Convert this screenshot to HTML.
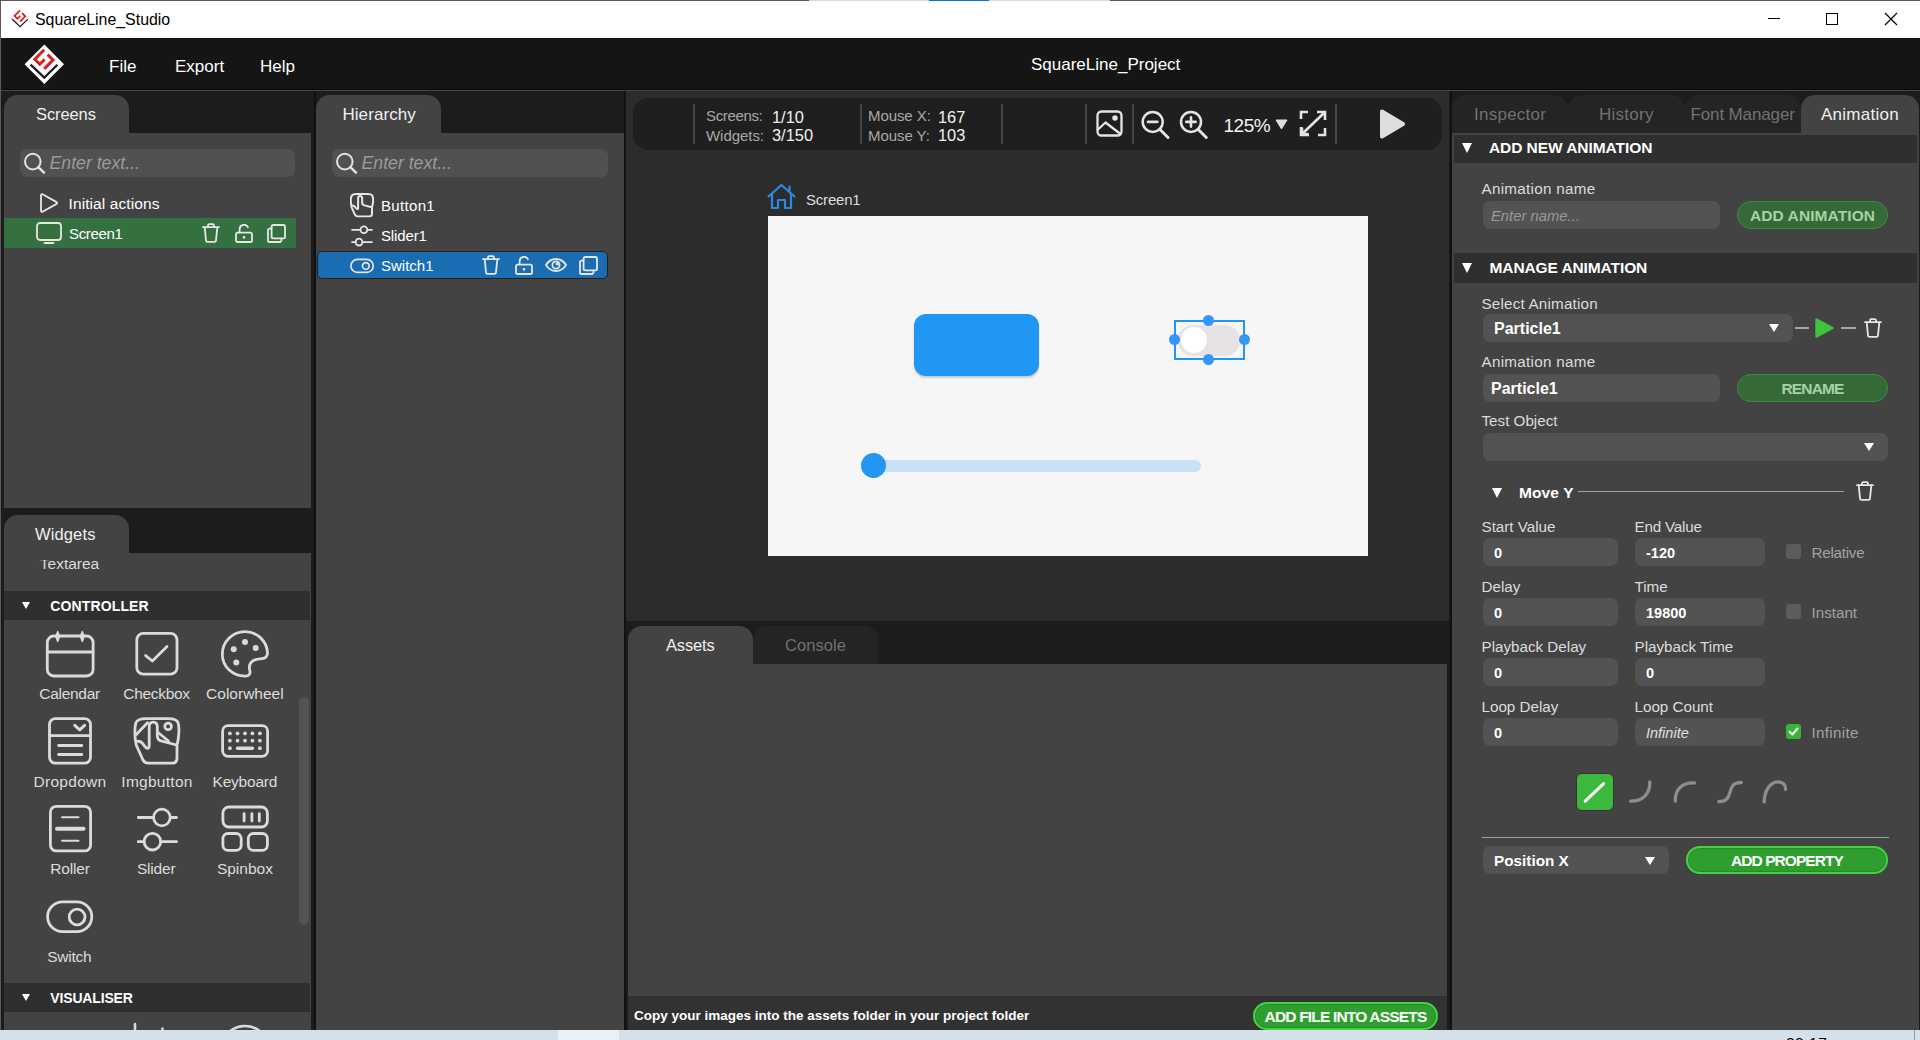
<!DOCTYPE html>
<html lang="en">
<head>
<meta charset="utf-8">
<title>SquareLine_Studio</title>
<style>
*{box-sizing:border-box;margin:0;padding:0}
html,body{width:1920px;height:1040px;overflow:hidden}
body{position:relative;background:#1c1c1c;font-family:"Liberation Sans",sans-serif;color:#e8e8e8;font-size:15px}
.abs{position:absolute}
.t{position:absolute;white-space:nowrap;line-height:1}
svg{position:absolute;overflow:visible}
.ico{fill:none;stroke:#e6e6e6;stroke-width:1.8;stroke-linecap:round;stroke-linejoin:round}
.panel{position:absolute;background:#434343}
.tab{position:absolute;background:#434343;border-radius:14px 14px 0 0;height:38px;top:95px}
.tab.off{background:#242424}
.tab .t{font-size:17px;top:11.2px;color:#f0f0f0;letter-spacing:.25px}
.tab .t.l{font-size:16.5px;top:11.200px;letter-spacing:0}
.tab.off .t{color:#727272}
.inp{position:absolute;background:#535353;border-radius:7px;height:28px}
.inp .t{font-weight:bold;font-size:14.5px;color:#fff;top:7.5px}
.inp .t.os{font-size:16px;top:7px}
.lbl{position:absolute;white-space:nowrap;line-height:1;font-size:15.2px;color:#dcdcdc}
.sec{position:absolute;background:#2f2f2f;height:27px}
.sec .t{font-weight:bold;font-size:15.5px;color:#fff;top:6px;letter-spacing:.1px}
.tri.s{border-left-width:5px;border-right-width:5px;border-top-width:8px}
.tri{position:absolute;width:0;height:0;border-left:5.8px solid transparent;border-right:5.8px solid transparent;border-top:10.6px solid #fff}
.btn{position:absolute;border-radius:14px;height:28px;border:2px solid #42d442;background:#2f9e2f;box-shadow:inset 0 0 0 1px rgba(0,0,0,.13);color:#fff;font-weight:bold;font-size:15.5px;text-align:center;line-height:26px;white-space:nowrap}
.btn.dim{background:#356a38;border:1.5px solid #3c8c40;line-height:27px;box-shadow:none;color:#a6d2a8}
.wl{position:absolute;white-space:nowrap;line-height:1;font-size:15.5px;color:#dcdcdc;text-align:center;width:100px}
</style>
</head>
<body>

<!-- icon symbol library -->
<svg width="0" height="0" style="left:0;top:0">
<defs>
<symbol id="i-search" viewBox="0 0 26 26"><circle cx="9.800" cy="11.600" r="7.800" fill="none" stroke="#e2e2e2" stroke-width="2"/><path d="M15.600 17.400 L21 22.600" stroke="#e2e2e2" stroke-width="2.4" stroke-linecap="round" fill="none"/></symbol>
<symbol id="i-trash" viewBox="0 0 18 20"><g class="ico"><path d="M1 4.2H17"/><path d="M6 4V2.4a1.3 1.3 0 0 1 1.3-1.3h3.4a1.3 1.3 0 0 1 1.3 1.3V4"/><path d="M2.7 4.4L4 17.4a1.6 1.6 0 0 0 1.6 1.5h6.8a1.6 1.6 0 0 0 1.6-1.5L15.3 4.4"/></g></symbol>
<symbol id="i-lock" viewBox="0 0 18 19"><g class="ico"><rect x="1" y="8.6" width="16" height="9.4" rx="1.6"/><path d="M4.6 8.4V5.2a4.4 4.4 0 0 1 8.3-2"/><path d="M9 12v2.6" stroke-width="2.2" stroke-linecap="butt"/></g></symbol>
<symbol id="i-copy" viewBox="0 0 19 19"><g class="ico"><rect x="4.6" y="1" width="13.4" height="13.4" rx="1.6"/><path d="M4.4 4.6H2.6A1.6 1.6 0 0 0 1 6.2v10.2A1.6 1.6 0 0 0 2.6 18h10.2a1.6 1.6 0 0 0 1.6-1.6V14.6"/></g></symbol>
<symbol id="i-eye" viewBox="0 0 22 14"><g class="ico"><path d="M1 7C3.6 2.8 7 1 11 1s7.4 1.8 10 6c-2.6 4.200-6 6-10 6S3.600 11.200 1 7z"/><circle cx="11" cy="7" r="3.6"/><circle cx="12.300" cy="5.800" r="0.700" fill="#e6e6e6"/></g></symbol>
<symbol id="i-switch" viewBox="0 0 26 16"><g class="ico"><rect x="1" y="1" width="24" height="14" rx="7"/><circle cx="17" cy="8" r="3.600"/></g></symbol>
<symbol id="i-slider" viewBox="0 0 22 22"><g class="ico"><path d="M1 4.800H9.400M16.400 4.800H21"/><circle cx="12.900" cy="4.800" r="3.400"/><path d="M1 17.100H4.600M11.400 17.100H21"/><circle cx="8" cy="17.100" r="3.400"/></g></symbol>
<symbol id="i-btn" viewBox="133 717 48 48"><g class="ico" style="stroke-width:4"><path d="M136.200 745C134.600 738 134.400 727 136 722.500C137.500 719 141 718.600 146 718.600H168C173.500 718.600 176.800 719.200 178 722.500C179.600 727 179 738 177 745V758C177 761.500 175.500 763.200 172 763.200H148C145.500 763.200 144 762 143 760Z"/><path d="M137 741.500C140 740.500 142.500 743 144.500 746C146 748.500 149.200 749.500 149.200 746V727C149.200 723.500 151 722.200 153.200 722.200C155.500 722.200 157.300 723.500 157.300 727V736C157.300 739 159 740.500 162 741.200L176.500 745"/></g></symbol>
</defs>
</svg>
<!-- ===== title bar ===== -->
<div class="abs" id="titlebar" style="left:0;top:0;width:1920px;height:38px;background:#fff"></div>
<div class="abs" style="left:0;top:0;width:809px;height:1px;background:#5a5a5a"></div>
<div class="abs" style="left:809px;top:0;width:301px;height:1px;background:#d9d9d9"></div>
<div class="abs" style="left:929px;top:0;width:60px;height:1px;background:#0a73d9"></div>
<div class="abs" style="left:1110px;top:0;width:810px;height:1px;background:#5a5a5a"></div>
<div class="t" style="left:35px;top:12.300px;font-size:15.9px;color:#000">SquareLine_Studio</div>
<!-- ===== menu bar ===== -->
<div class="abs" id="menubar" style="left:0;top:38px;width:1920px;height:52px;background:#151515"></div>
<div class="abs" style="left:0;top:89px;width:1920px;height:1px;background:#0b0b0b"></div>
<div class="abs" style="left:0;top:90px;width:1920px;height:1px;background:#474747"></div>
<div class="t" style="left:109px;top:58px;font-size:17px;color:#fff">File</div>
<div class="t" style="left:175px;top:58px;font-size:17px;color:#fff">Export</div>
<div class="t" style="left:260px;top:58px;font-size:17px;color:#fff">Help</div>
<div class="t" style="left:1031px;top:56px;font-size:17px;color:#fff">SquareLine_Project</div>
<svg style="left:0;top:0" width="100" height="90" viewBox="0 0 100 90">
<defs><g id="slmark"><path d="M44.200 49.800L34.800 59.200L39.800 64.200L44.600 59.400" fill="none" stroke="#db1f1f" stroke-width="3"/><path d="M47.600 54.600L53 60L44.200 68.900" fill="none" stroke="#db1f1f" stroke-width="3"/><path d="M30.600 64.600L44.300 77.600L57.400 64.800" fill="none" stroke="#1c1c1c" stroke-width="2.200"/></g></defs>
<path d="M44.300 44.600L64 64.200L44.300 83.900L24.600 64.200z" fill="#fff"/>
<use href="#slmark"/>
<g transform="translate(20.100 27.400) scale(0.590) translate(-44.300 -78.800)"><use href="#slmark"/></g>
</svg>
<svg style="left:1760px;top:8px" width="150" height="22" viewBox="1760 8 150 22"><g fill="none" stroke="#000" stroke-width="1"><path d="M1768 18.500H1780"/><rect x="1826.500" y="13.500" width="11" height="11"/><path d="M1885 13L1897 25M1897 13L1885 25" stroke-width="1.200"/></g></svg>
<!-- window left border -->
<div class="abs" style="left:0;top:1px;width:1px;height:1029px;background:#5a5a5a"></div>

<!-- ===== SCREENS panel ===== -->
<div class="tab" style="left:4px;width:125px"><div class="t l" style="left:32px;letter-spacing:-.1px">Screens</div></div>
<div class="panel" id="screens" style="left:4px;top:133px;width:307px;height:375px">
<div class="inp" style="left:16px;top:16px;width:275px;height:28px;background:#515151"><svg style="left:3px;top:1px" width="26" height="26"><use href="#i-search"/></svg><div class="t" style="left:29.500px;top:6px;font-size:17.700px;font-style:italic;font-weight:normal;color:#9b9b9b">Enter text...</div></div>
<svg style="left:36px;top:60px" width="18" height="20" viewBox="0 0 18 20"><path class="ico" d="M1 2.200V17.800a1 1 0 0 0 1.500 0.900L16.600 10.900a1 1 0 0 0 0-1.800L2.500 1.300A1 1 0 0 0 1 2.200z"/></svg>
<div class="t" style="left:64.500px;top:63px;font-size:15.500px;letter-spacing:.1px;color:#fff">Initial actions</div>
<div class="abs" style="left:0;top:85px;width:292px;height:30px;background:#357040"></div>
<svg style="left:32px;top:89px" width="26" height="22" viewBox="0 0 26 22"><g class="ico"><rect x="1" y="1" width="24" height="17" rx="3"/><path d="M8.500 21H17.500"/></g></svg>
<div class="t" style="left:65px;top:93px;font-size:15px;letter-spacing:-.35px;color:#fff">Screen1</div>
<svg style="left:198px;top:90px" width="18" height="20"><use href="#i-trash"/></svg>
<svg style="left:231px;top:91px" width="18" height="19"><use href="#i-lock"/></svg>
<svg style="left:263px;top:91px" width="19" height="19"><use href="#i-copy"/></svg>
</div>

<!-- ===== WIDGETS panel ===== -->
<div class="tab" style="left:4px;top:515px;width:125px"><div class="t l" style="left:31px;letter-spacing:.13px">Widgets</div></div>
<div class="panel" id="widgets" style="left:4px;top:553px;width:307px;height:477px;overflow:hidden">
<div class="abs" style="left:0;top:7px;width:307px;height:30px;overflow:hidden"><div class="wl" style="left:15.5px;top:-4px">Textarea</div></div>
<div class="sec" style="left:0;top:37.5px;width:306px;height:29px"><div class="tri s" style="left:18px;top:11px;border-left-width:4.5px;border-right-width:4.500px;border-top-width:7.500px"></div><div class="t" style="left:46.300px;top:8px;font-size:14px;letter-spacing:.13px">CONTROLLER</div></div>
<div class="wl" style="left:15.599999999999994px;top:133.3px;letter-spacing:-0.3px">Calendar</div>
<div class="wl" style="left:102.5px;top:133.3px;letter-spacing:-0.3px">Checkbox</div>
<div class="wl" style="left:190.9px;top:133.3px">Colorwheel</div>
<div class="wl" style="left:16px;top:221px;letter-spacing:0.3px">Dropdown</div>
<div class="wl" style="left:103px;top:221px;letter-spacing:0.27px">Imgbutton</div>
<div class="wl" style="left:190.9px;top:221px;letter-spacing:-0.2px">Keyboard</div>
<div class="wl" style="left:16px;top:308px;letter-spacing:-0.2px">Roller</div>
<div class="wl" style="left:102.19999999999999px;top:308px;letter-spacing:-0.2px">Slider</div>
<div class="wl" style="left:190.9px;top:308px">Spinbox</div>
<div class="wl" style="left:15.299999999999997px;top:395.8px;letter-spacing:-0.25px">Switch</div>
<svg style="left:0;top:0" width="307" height="477" viewBox="4 553 307 477"><g fill="none" stroke="#dbdbdb" stroke-width="2.800" stroke-linecap="round" stroke-linejoin="round">
<rect x="47.300" y="636" width="45.800" height="40" rx="6.500"/><path d="M47.500 652H93"/><path d="M57.700 631.500L59.600 636.500L57.700 641.500L55.800 636.500zM82.300 631.500L84.200 636.500L82.300 641.500L80.400 636.500z" fill="#d9d9d9" stroke-width="1.400"/>
<rect x="136.800" y="633.400" width="40.200" height="40.800" rx="6.500"/><path d="M145.600 655.600L152.400 661L167 646.500"/>
<path d="M245 631.700C232.500 631.700 222.300 641.800 222.300 654.200C222.300 666.600 232.500 676.200 245 676.200C249.500 676.200 250.500 673.500 249.800 670.500C248.800 666.500 249.500 662.500 254 660.200C258 658.200 262.500 659.500 265.500 657.500C267.500 656.200 267.600 654.200 267.500 652.500C266.500 640.500 257 631.700 245 631.700z"/>
<g fill="#d9d9d9" stroke="none"><circle cx="233.700" cy="649.200" r="3"/><circle cx="245" cy="642" r="3"/><circle cx="255.700" cy="648" r="3"/><circle cx="236.300" cy="662.400" r="3"/></g>
<rect x="49.500" y="718.600" width="41" height="44.600" rx="6"/><path d="M49.700 735.600H90.300"/><path d="M74.800 725.300L79.700 729.800L84.600 725.300" stroke-width="3"/><path d="M58.600 745.500H81.800M58.600 754.500H81.800"/>
<path d="M136.200 745C134.600 738 134.400 727 136 722.500C137.500 719 141 718.600 146 718.600H168C173.500 718.600 176.800 719.200 178 722.500C179.600 727 179 738 177 745V758C177 761.500 175.500 763.200 172 763.200H148C145.500 763.200 144 762 143 760Z"/>
<path d="M137 741.500C140 740.500 142.500 743 144.500 746C146 748.500 149.200 749.500 149.200 746V727C149.200 723.500 151 722.200 153.200 722.200C155.500 722.200 157.300 723.500 157.300 727V736C157.300 739 159 740.500 162 741.200L176.500 745"/>
<path d="M136.300 734.500L147.500 722.800M158 732.500L168.500 741"/>
<circle cx="168.100" cy="726.400" r="3.300"/>
<rect x="222.600" y="725.700" width="45" height="30.600" rx="5.500"/><g fill="#d9d9d9" stroke="none">
<circle cx="229.9" cy="733.4" r="1.900"/>
<circle cx="237.5" cy="733.4" r="1.900"/>
<circle cx="245" cy="733.4" r="1.900"/>
<circle cx="252.4" cy="733.4" r="1.900"/>
<circle cx="259.9" cy="733.4" r="1.900"/>
<circle cx="229.9" cy="740.7" r="1.900"/>
<circle cx="237.5" cy="740.7" r="1.900"/>
<circle cx="245" cy="740.7" r="1.900"/>
<circle cx="252.4" cy="740.7" r="1.900"/>
<circle cx="259.9" cy="740.7" r="1.900"/>
<circle cx="229.900" cy="748.200" r="1.900"/><circle cx="259.900" cy="748.200" r="1.900"/></g><path d="M237.500 748.200H252.400" stroke-width="3.400"/>
<rect x="50.400" y="806.300" width="40.200" height="44.600" rx="6"/><path d="M62 817.200H78.500M62 840.800H78.500" stroke-width="2"/><path d="M57 828.800H83.500" stroke-width="4"/>
<path d="M138.300 817.500H153.500M170.300 817.500H176.500"/><circle cx="161.900" cy="817.500" r="8.300"/><path d="M138.300 841.700H144M160.800 841.700H176.500"/><circle cx="152.400" cy="841.700" r="8.300"/>
<rect x="222.900" y="807" width="44.500" height="20" rx="6"/><path d="M244.100 813.600V821M251.900 813.600V821M259.300 813.600V821"/><rect x="222.900" y="833.500" width="18.300" height="16.800" rx="5"/><rect x="248.300" y="833.500" width="19.100" height="16.800" rx="5"/>
<rect x="47.600" y="901.900" width="44.200" height="29.800" rx="14.900"/><circle cx="77.100" cy="917" r="7.900"/>
</g></svg>
<div class="sec" style="left:0;top:430px;width:306px;height:29px"><div class="tri s" style="left:18px;top:11px;border-left-width:4.5px;border-right-width:4.500px;border-top-width:7.500px"></div><div class="t" style="left:46.300px;top:8px;font-size:14px;letter-spacing:-.16px">VISUALISER</div></div>
<svg style="left:0;top:459px" width="307" height="20" viewBox="4 1012 307 20"><g fill="none" stroke="#d9d9d9" stroke-width="2.600" stroke-linecap="round"><path d="M135 1024V1040M162.500 1028.500V1040"/><circle cx="245" cy="1050" r="24"/></g></svg>
<div class="abs" style="left:295px;top:144px;width:10px;height:228px;border-radius:5px;background:#535353"></div>
</div>

<!-- ===== HIERARCHY panel ===== -->
<div class="tab" style="left:316px;width:125px"><div class="t" style="left:26.400px;letter-spacing:.09px">Hierarchy</div></div>
<div class="panel" id="hier" style="left:316px;top:133px;width:308px;height:897px">
<div class="inp" style="left:16px;top:16px;width:276px;height:28px;background:#515151"><svg style="left:3px;top:1px" width="26" height="26"><use href="#i-search"/></svg><div class="t" style="left:29.500px;top:6px;font-size:17.700px;font-style:italic;font-weight:normal;color:#9b9b9b">Enter text...</div></div>
<svg style="left:33.800px;top:60.400px" width="24" height="24.600" preserveAspectRatio="none"><use href="#i-btn"/></svg>
<div class="t" style="left:65px;top:65px;font-size:15px;letter-spacing:.33px;color:#fff">Button1</div>
<svg style="left:34.600px;top:91.800px" width="22" height="22"><use href="#i-slider"/></svg>
<div class="t" style="left:65px;top:95px;font-size:15px;letter-spacing:-.14px;color:#fff">Slider1</div>
<div class="abs" style="left:1px;top:118px;width:291px;height:28px;background:#1a6db1;border:1px solid #23201a;border-radius:5px"></div>
<svg style="left:33.500px;top:124.800px" width="24.200" height="15.800"><use href="#i-switch"/></svg>
<div class="t" style="left:65px;top:125px;font-size:15px;color:#fff">Switch1</div>
<svg style="left:166px;top:122px" width="18" height="20"><use href="#i-trash"/></svg>
<svg style="left:199px;top:123px" width="18" height="19"><use href="#i-lock"/></svg>
<svg style="left:229px;top:125px" width="22" height="14"><use href="#i-eye"/></svg>
<svg style="left:263px;top:123px" width="19" height="19"><use href="#i-copy"/></svg>
</div>

<!-- ===== CENTER ===== -->
<div class="abs" style="left:314px;top:91px;width:2px;height:939px;background:#111"></div>
<div class="abs" style="left:624px;top:91px;width:2px;height:939px;background:#111"></div>
<div class="abs" style="left:1450px;top:91px;width:2px;height:939px;background:#111"></div>
<div class="abs" id="canvasarea" style="left:626px;top:91px;width:823px;height:530px;background:#2c2c2c"></div>
<div class="abs" id="toolbar" style="left:633px;top:98px;width:809px;height:52px;background:#1f1f1f;border-radius:15px"></div>
<div class="abs" style="left:693px;top:104px;width:2px;height:40px;background:#454545"></div>
<div class="abs" style="left:860px;top:104px;width:2px;height:40px;background:#454545"></div>
<div class="abs" style="left:1001px;top:104px;width:2px;height:40px;background:#454545"></div>
<div class="abs" style="left:1085px;top:104px;width:2px;height:40px;background:#454545"></div>
<div class="abs" style="left:1132px;top:104px;width:2px;height:40px;background:#454545"></div>
<div class="abs" style="left:1335px;top:104px;width:2px;height:40px;background:#454545"></div>
<div class="t" style="left:706px;top:108px;font-size:15px;letter-spacing:-.35px;color:#a9a9a9">Screens:</div>
<div class="t" style="left:706px;top:128px;font-size:15px;letter-spacing:-.05px;color:#a9a9a9">Widgets:</div>
<div class="t" style="left:772px;top:109px;font-size:16.400px;color:#f2f2f2">1/10</div>
<div class="t" style="left:772px;top:127px;font-size:16.400px;color:#f2f2f2">3/150</div>
<div class="t" style="left:868px;top:108px;font-size:15px;letter-spacing:-.08px;color:#a9a9a9">Mouse X:</div>
<div class="t" style="left:868px;top:128px;font-size:15px;letter-spacing:-.06px;color:#a9a9a9">Mouse Y:</div>
<div class="t" style="left:938px;top:109px;font-size:16.400px;color:#f2f2f2">167</div>
<div class="t" style="left:938px;top:127px;font-size:16.400px;color:#f2f2f2">103</div>
<svg style="left:1096px;top:110px" width="27" height="27" viewBox="0 0 27 27"><g class="ico" style="stroke-width:2.300;stroke:#e4e4e4"><rect x="1.500" y="1.500" width="24" height="24" rx="4"/><path d="M2 19.500L9.500 12.500L24.500 24"/><circle cx="19" cy="8" r="1.600" fill="#e4e4e4"/></g></svg>
<svg style="left:1140px;top:109px" width="32" height="32" viewBox="0 0 32 32"><g class="ico" style="stroke-width:2.500;stroke:#e4e4e4"><circle cx="12.700" cy="12.900" r="10"/><path d="M20 20.500L28 28.500" stroke-width="3"/><path d="M8 12.900H17.400" stroke-width="2.600"/></g></svg>
<svg style="left:1178px;top:109px" width="32" height="32" viewBox="0 0 32 32"><g class="ico" style="stroke-width:2.500;stroke:#e4e4e4"><circle cx="13" cy="12.900" r="10"/><path d="M20.300 20.500L28.300 28.500" stroke-width="3"/><path d="M8.300 12.900H17.700M13 8.200V17.600" stroke-width="2.600"/></g></svg>
<div class="t" style="left:1223.500px;top:115.800px;font-size:19px;letter-spacing:-.45px;color:#f2f2f2">125%</div>
<svg style="left:1275px;top:119px" width="13" height="11" viewBox="0 0 13 11"><path d="M1 1H12L6.500 10z" fill="#dcdcdc" stroke="#dcdcdc" stroke-width="1" stroke-linejoin="round"/></svg>
<svg style="left:1299px;top:110px" width="28" height="27" viewBox="0 0 28 27"><g class="ico" style="stroke-width:2.600;stroke:#e4e4e4;stroke-linecap:butt;stroke-linejoin:miter"><path d="M2 9V2H9"/><path d="M18 2H26V10"/><path d="M26 18V25H19"/><path d="M10 25H2V17"/><path d="M3 24L25 3"/><path d="M3 17.500V24H9.500" /></g></svg>
<svg style="left:1378px;top:108px" width="29" height="32" viewBox="0 0 29 32"><path d="M3 3.500V28.500a1 1 0 0 0 1.500 0.900L25.500 17a1.200 1.200 0 0 0 0-2L4.500 2.600A1 1 0 0 0 3 3.500z" fill="#dedede" stroke="#dedede" stroke-width="2" stroke-linejoin="round"/></svg>

<!-- canvas content -->
<svg style="left:767px;top:183px" width="29" height="27" viewBox="0 0 29 27"><g class="ico" style="stroke:#2a8ae2;stroke-width:2.200"><path d="M1.500 13.500L14.500 2L27.500 13.500"/><path d="M5 11V25H11V17H18V25H24V11"/><path d="M22.500 8V3.500"/></g></svg>
<div class="t" style="left:806px;top:192px;font-size:15px;letter-spacing:-.2px;color:#dedede">Screen1</div>
<div class="abs" id="lvscreen" style="left:768px;top:216px;width:600px;height:340px;background:#f6f6f6"></div>
<div class="abs" style="left:914px;top:314px;width:125px;height:62px;background:#2196f3;border-radius:12px;box-shadow:0 2px 2px rgba(0,0,0,.18)"></div>
<div class="abs" style="left:873px;top:460px;width:328px;height:12px;background:#c9e0f7;border-radius:6px"></div>
<div class="abs" style="left:861px;top:453px;width:25px;height:25px;background:#2196f3;border-radius:50%"></div>
<div class="abs" style="left:1178px;top:325px;width:62px;height:31px;background:#e6e2e6;border-radius:16px"></div>
<div class="abs" style="left:1181px;top:327px;width:26px;height:26px;background:#fff;border-radius:50%"></div>
<div class="abs" style="left:1174px;top:320px;width:71px;height:40px;border:2px solid #2196f3"></div>
<div class="abs" style="left:1169px;top:334.400px;width:11px;height:11px;background:#3497f6;border-radius:50%"></div>
<div class="abs" style="left:1239px;top:334.400px;width:11px;height:11px;background:#3497f6;border-radius:50%"></div>
<div class="abs" style="left:1203.300px;top:315.400px;width:11px;height:11px;background:#3497f6;border-radius:50%"></div>
<div class="abs" style="left:1203.300px;top:354px;width:11px;height:11px;background:#3497f6;border-radius:50%"></div>

<!-- ===== ASSETS ===== -->
<div class="tab" style="left:628px;top:626px;width:125px"><div class="t l" style="left:38px;letter-spacing:-.15px">Assets</div></div>
<div class="tab off" style="left:753px;top:626px;width:125px"><div class="t l" style="left:32px;letter-spacing:.05px">Console</div></div>
<div class="panel" id="assets" style="left:628px;top:664px;width:819px;height:332px"></div>
<div class="abs" id="assetsfoot" style="left:628px;top:996px;width:819px;height:34px;background:#323232;overflow:hidden">
<div class="t" style="left:6px;top:13px;font-weight:bold;font-size:13.5px;color:#fff">Copy your images into the assets folder in your project folder</div>
<div class="btn" style="left:625px;top:5.500px;width:185px;letter-spacing:-.82px">ADD FILE INTO ASSETS</div>
</div>

<!-- ===== RIGHT panel ===== -->
<div class="tab off" style="left:1452px;width:116px"><div class="t" style="left:22px">Inspector</div></div>
<div class="tab off" style="left:1568px;width:117px"><div class="t" style="left:31px">History</div></div>
<div class="tab off" style="left:1685px;width:116px"><div class="t" style="left:5.500px;letter-spacing:-.13px">Font Manager</div></div>
<div class="tab" style="left:1801px;width:117.500px"><div class="t" style="left:20px">Animation</div></div>
<div class="panel" id="right" style="left:1452px;top:133px;width:466.500px;height:897px">
<div class="sec" style="left:2px;top:2px;width:463px;height:27.500px"><div class="tri" style="left:8px;top:7.500px"></div><div class="t" style="left:35px;top:5.400px;letter-spacing:-.07px">ADD NEW ANIMATION</div></div>
<div class="lbl" style="left:29.5px;top:48px;letter-spacing:.3px">Animation name</div>
<div class="inp" style="left:31px;top:68px;width:237px;height:28px"><div class="t" style="left:8px;font-weight:normal;font-style:italic;color:#9a9a9a;font-size:14.800px;top:7.500px">Enter name...</div></div>
<div class="btn dim" style="left:285px;top:68px;width:151px"><span style="letter-spacing:.09px">ADD ANIMATION</span></div>
<div class="sec" style="left:2px;top:120px;width:463px;height:29.600px"><div class="tri" style="left:8px;top:9.500px"></div><div class="t" style="left:35.500px;top:7.400px;letter-spacing:-.1px">MANAGE ANIMATION</div></div>
<div class="lbl" style="left:29.5px;top:163px;letter-spacing:.2px">Select Animation</div>
<div class="inp" style="left:31px;top:181px;width:310px;height:28px"><div class="t os" style="left:11px;">Particle1</div></div>
<div class="tri s" style="left:317px;top:191px"></div>
<div class="abs" style="left:343px;top:194px;width:14px;height:2px;background:#a8a8a8"></div>
<svg style="left:362px;top:184px" width="21" height="22" viewBox="0 0 21 22"><path d="M2.500 2.500V19.500L18.500 11z" fill="#3ec43e" stroke="#3ec43e" stroke-width="2.400" stroke-linejoin="round"/></svg>
<div class="abs" style="left:389px;top:194px;width:15px;height:2px;background:#a8a8a8"></div>
<svg style="left:411.5px;top:185px" width="18" height="20"><use href="#i-trash"/></svg>
<div class="lbl" style="left:29.5px;top:221px;letter-spacing:.3px">Animation name</div>
<div class="inp" style="left:31px;top:241px;width:237px;height:28px"><div class="t os" style="left:8px;">Particle1</div></div>
<div class="btn dim" style="left:285px;top:241px;width:151px" ><span style="letter-spacing:-.87px">RENAME</span></div>
<div class="lbl" style="left:29.5px;top:280px;">Test Object</div>
<div class="inp" style="left:31px;top:300px;width:405px;height:28px"><div class="t" style="left:11px;"></div></div>
<div class="tri s" style="left:412px;top:310px"></div>
<div class="tri" style="left:40px;top:354.5px"></div>
<div class="t" style="left:67px;top:352px;font-weight:bold;font-size:15.500px;letter-spacing:.1px;color:#fff">Move Y</div>
<div class="abs" style="left:126px;top:358px;width:266px;height:1px;background:#a0a0a0"></div>
<svg style="left:404px;top:348px" width="18" height="20"><use href="#i-trash"/></svg>
<div class="lbl" style="left:29.5px;top:386px;">Start Value</div>
<div class="lbl" style="left:182.5px;top:386px;letter-spacing:-.2px">End Value</div>
<div class="inp" style="left:31px;top:405px;width:135px;height:28px"><div class="t" style="left:11px;">0</div></div>
<div class="inp" style="left:183px;top:405px;width:130px;height:28px"><div class="t" style="left:11px;">-120</div></div>
<div class="abs" style="left:334px;top:411px;width:15px;height:15px;border-radius:3px;background:#5c5c5c"></div>
<div class="lbl" style="left:359.5px;top:412px;color:#a2a2a2;letter-spacing:-.25px">Relative</div>
<div class="lbl" style="left:29.5px;top:446px;">Delay</div>
<div class="lbl" style="left:182.5px;top:446px;">Time</div>
<div class="inp" style="left:31px;top:465px;width:135px;height:28px"><div class="t" style="left:11px;">0</div></div>
<div class="inp" style="left:183px;top:465px;width:130px;height:28px"><div class="t" style="left:11px;">19800</div></div>
<div class="abs" style="left:334px;top:471px;width:15px;height:15px;border-radius:3px;background:#5c5c5c"></div>
<div class="lbl" style="left:359.5px;top:472px;color:#a2a2a2">Instant</div>
<div class="lbl" style="left:29.5px;top:506px;">Playback Delay</div>
<div class="lbl" style="left:182.5px;top:506px;">Playback Time</div>
<div class="inp" style="left:31px;top:525px;width:135px;height:28px"><div class="t" style="left:11px;">0</div></div>
<div class="inp" style="left:183px;top:525px;width:130px;height:28px"><div class="t" style="left:11px;">0</div></div>
<div class="lbl" style="left:29.5px;top:566px;">Loop Delay</div>
<div class="lbl" style="left:182.5px;top:566px;">Loop Count</div>
<div class="inp" style="left:31px;top:585px;width:135px;height:28px"><div class="t" style="left:11px;">0</div></div>
<div class="inp" style="left:183px;top:585px;width:130px;height:28px"><div class="t" style="left:11px;font-weight:normal;font-style:italic;color:#e0e0e0">Infinite</div></div>
<div class="abs" style="left:334px;top:591px;width:15px;height:15px;border-radius:3px;background:#38b438"><svg style="left:0;top:0" width="15" height="15" viewBox="0 0 15 15"><path d="M3.500 7.800L6.300 10.500L11.500 4.500" fill="none" stroke="#fff" stroke-width="2" stroke-linecap="round" stroke-linejoin="round"/></svg></div>
<div class="lbl" style="left:359.5px;top:592px;color:#a2a2a2;letter-spacing:.3px">Infinite</div>
<div class="abs" style="left:124.400px;top:640px;width:37.600px;height:38px;border-radius:6px;background:#3cb93c;border:1px solid #38303a"></div>
<svg style="left:125px;top:641px" width="220" height="37" viewBox="1577 774 220 37"><g fill="none" stroke-linecap="round" stroke-width="3.300"><path d="M1585.200 801.200L1603.600 783.700" stroke="#fff" stroke-width="3"/><g stroke="#8e8e8e"><path d="M1630.600 801.200C1643 801.200 1650 794 1649.800 782"/><path d="M1675.300 801.200C1675 789 1682 782.500 1694.400 783"/><path d="M1718.800 801.600C1736 801.600 1724 782.500 1741.200 782.500"/><path d="M1764.100 801.900C1764.500 790 1771 781.500 1778 781.800C1783 782 1785.800 785 1785.600 789.400"/></g></g></svg>
<div class="abs" style="left:30px;top:704px;width:407px;height:1px;background:#a0a0a0"></div>
<div class="inp" style="left:31px;top:713px;width:186px;height:28px"><div class="t os" style="left:11px;font-size:15.300px;top:7.300px">Position X</div></div>
<div class="tri s" style="left:193px;top:724px"></div>
<div class="btn" style="left:234px;top:713px;width:202px"><span style="letter-spacing:-.93px">ADD PROPERTY</span></div>
</div>

<!-- ===== taskbar strip ===== -->
<div class="abs" id="taskbar" style="left:0;top:1030px;width:1920px;height:10px;background:#d5e1e9;overflow:hidden">
<div class="abs" style="left:558px;top:0;width:61px;height:10px;background:#e9f1f5"></div>
<div class="t" style="left:1786px;top:5px;font-size:15.500px;letter-spacing:.5px;color:#000">22:17</div>
<div class="abs" style="left:1914px;top:0;width:1px;height:10px;background:#8f9ca3"></div>
</div>
</body>
</html>
